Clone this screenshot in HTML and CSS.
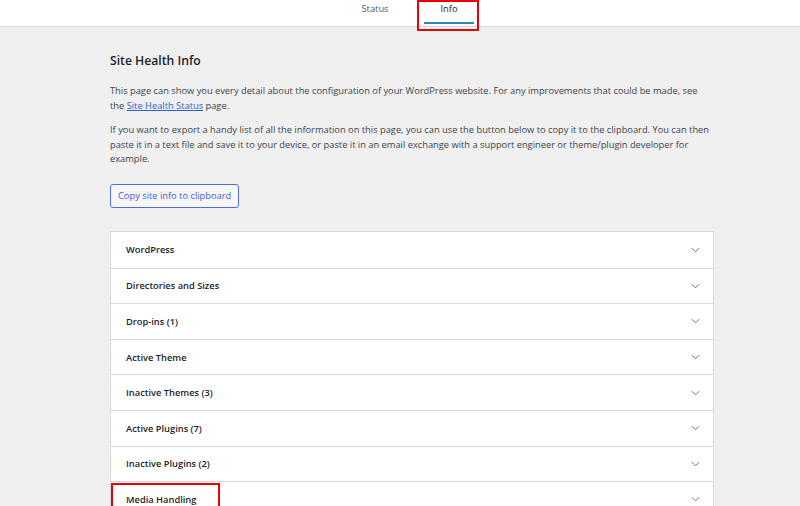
FILE: index.html
```html
<!DOCTYPE html>
<html lang="en">
<head>
<meta charset="utf-8">
<title>Site Health Info</title>
<link rel="stylesheet" href="styles.css">
</head>
<body>
<header class="tabs-bar">
  <nav class="tabs">
    <a class="tab" href="#">Status</a>
    <a class="tab tab-active" href="#">Info</a>
  </nav>
</header>
<main class="content">
  <h2 class="title">Site Health Info</h2>
  <p class="para">This page can show you every detail about the configuration of your WordPress website. For any improvements that could be made, see the <a class="link" href="#">Site Health Status</a> page.</p>
  <p class="para">If you want to export a handy list of all the information on this page, you can use the button below to copy it to the clipboard. You can then paste it in a text file and save it to your device, or paste it in an email exchange with a support engineer or theme/plugin developer for example.</p>
  <button class="copy-btn" type="button">Copy site info to clipboard</button>
  <div class="accordion">
    <div class="acc-row"><span class="acc-label">WordPress</span><svg class="chev" viewBox="0 0 10 6"><path d="M1 1l4 4 4-4"/></svg></div>
    <div class="acc-row"><span class="acc-label">Directories and Sizes</span><svg class="chev" viewBox="0 0 10 6"><path d="M1 1l4 4 4-4"/></svg></div>
    <div class="acc-row"><span class="acc-label">Drop-ins (1)</span><svg class="chev" viewBox="0 0 10 6"><path d="M1 1l4 4 4-4"/></svg></div>
    <div class="acc-row"><span class="acc-label">Active Theme</span><svg class="chev" viewBox="0 0 10 6"><path d="M1 1l4 4 4-4"/></svg></div>
    <div class="acc-row"><span class="acc-label">Inactive Themes (3)</span><svg class="chev" viewBox="0 0 10 6"><path d="M1 1l4 4 4-4"/></svg></div>
    <div class="acc-row"><span class="acc-label">Active Plugins (7)</span><svg class="chev" viewBox="0 0 10 6"><path d="M1 1l4 4 4-4"/></svg></div>
    <div class="acc-row"><span class="acc-label">Inactive Plugins (2)</span><svg class="chev" viewBox="0 0 10 6"><path d="M1 1l4 4 4-4"/></svg></div>
    <div class="acc-row"><span class="acc-label acc-marked">Media Handling</span><svg class="chev" viewBox="0 0 10 6"><path d="M1 1l4 4 4-4"/></svg></div>
  </div>
</main>
</body>
</html>
```

FILE: styles.css
```css
html, body {
  margin: 0;
  padding: 0;
  height: 100%;
  overflow: hidden;
}
body {
  background: #f0f0f1;
  font-family: "Open Sans", "Noto Sans", sans-serif;
  color: #3c434a;
  font-size: 9.3px;
}
.tabs-bar {
  background: #fff;
  border-bottom: 1px solid #dcdcde;
  height: 27px;
  box-sizing: border-box;
}
.tabs {
  display: flex;
  justify-content: center;
  height: 100%;
  padding-left: 24px;
}
.tab {
  position: relative;
  display: flex;
  align-items: flex-start;
  justify-content: center;
  padding-top: 2px;
  color: #50575e;
  text-decoration: none;
  font-size: 9.3px;
  width: 50px;
  margin: 0 12px;
}
.tab-active {
  color: #1d2327;
}
.tab-active::after {
  content: "";
  position: absolute;
  left: 0;
  right: 0;
  bottom: 2px;
  height: 2.5px;
  background: #3582c4;
}
.tab-active::before {
  content: "";
  position: absolute;
  left: -7px;
  right: -5px;
  top: 0;
  height: 31px;
  border: 2px solid #e8000b;
  box-sizing: border-box;
}
.content {
  padding: 0 86px 0 110px;
}
.title {
  margin: 26px 0 0;
  font-size: 12.2px;
  font-weight: 600;
  color: #1d2327;
  line-height: 16px;
}
.para {
  margin: 15px 0 0;
  line-height: 14.6px;
  max-width: 600px;
}
.para + .para {
  margin-top: 10px;
}
.link {
  color: #2d5fd4;
}
.copy-btn {
  margin-top: 17px;
  height: 24px;
  padding: 0 7px;
  border: 1px solid #5068e8;
  border-radius: 3px;
  background: #f6f7f7;
  color: #4658d8;
  font-family: inherit;
  font-size: 9.3px;
}
.accordion {
  margin-top: 23px;
  width: 602px;
  border: 1px solid #d8d8da;
  background: #fff;
}
.acc-row {
  height: 35.6px;
  box-sizing: border-box;
  display: flex;
  align-items: center;
  justify-content: space-between;
  padding: 0 13px 0 15px;
  border-top: 1px solid #d8d8da;
  color: #1d2327;
}
.acc-row:first-child {
  border-top: 0;
}
.acc-label {
  position: relative;
  font-weight: 600;
  font-size: 9.3px;
}
.acc-marked::before {
  content: "";
  position: absolute;
  left: -15px;
  right: -24px;
  top: -10px;
  height: 32px;
  border: 2px solid #e8000b;
}
.chev {
  width: 9px;
  height: 6px;
  fill: none;
  stroke: #6b7075;
  stroke-width: 1.1;
}
```
